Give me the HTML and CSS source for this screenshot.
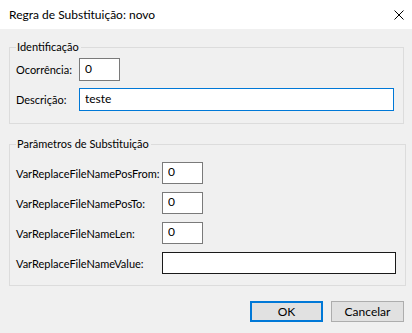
FILE: index.html
```html
<!DOCTYPE html>
<html lang="pt">
  <head>
    <meta charset="UTF-8" />
    <meta name="viewport" content="width=device-width, initial-scale=1.0" />
    <title>Regra de Substituição: novo</title>
    <link rel="stylesheet" href="styles.css">
  </head>
  <body>
    <div class="titlebar">
      <span class="title">Regra de Substituição: novo</span>
      <svg class="close" width="10" height="10" viewBox="0 0 10 10">
        <path d="M0.5 0.5 L9.5 9.5 M9.5 0.5 L0.5 9.5" stroke="#000" stroke-width="1" fill="none" />
      </svg>
    </div>

    <div class="dialog">
      <fieldset class="group group-ident">
        <legend>Identificação</legend>
        <div class="row">
          <label class="label-short" for="ocorrencia">Ocorrência:</label>
          <input class="field field-small" type="text" id="ocorrencia" value="0" />
        </div>
        <div class="row">
          <label class="label-short" for="descricao">Descrição:</label>
          <input class="field field-wide focused" type="text" id="descricao" value="teste" />
        </div>
      </fieldset>

      <fieldset class="group group-params">
        <legend>Parâmetros de Substituição</legend>
        <div class="row">
          <label class="label-long" for="posFrom">VarReplaceFileNamePosFrom:</label>
          <input class="field field-small" type="text" id="posFrom" value="0" />
        </div>
        <div class="row">
          <label class="label-long" for="posTo">VarReplaceFileNamePosTo:</label>
          <input class="field field-small" type="text" id="posTo" value="0" />
        </div>
        <div class="row">
          <label class="label-long" for="nameLen">VarReplaceFileNameLen:</label>
          <input class="field field-small" type="text" id="nameLen" value="0" />
        </div>
        <div class="row row-last">
          <label class="label-long" for="nameValue">VarReplaceFileNameValue:</label>
          <input class="field field-value" type="text" id="nameValue" value="" />
        </div>
      </fieldset>

      <div class="buttons">
        <button class="btn btn-default" type="button">OK</button>
        <button class="btn" type="button">Cancelar</button>
      </div>
    </div>
  </body>
</html>
```

FILE: styles.css
```css
:root {
  --bg-color: #f0f0f0;
  --text-color: #000000;
  --group-border: #dcdcdc;
  --input-border: #7a7a7a;
  --focus-border: #0078d7;
  --button-bg: #e1e1e1;
  --button-border: #adadad;
}

* {
  box-sizing: border-box;
}

body {
  margin: 0;
  width: 412px;
  height: 333px;
  background-color: var(--bg-color);
  color: var(--text-color);
  font-family: Lato, "Noto Sans", sans-serif;
  font-size: 12px;
  overflow: hidden;
}

.titlebar {
  display: flex;
  align-items: center;
  justify-content: space-between;
  height: 29px;
  padding: 0 8px 0 9px;
  background-color: #ffffff;
}

.title {
  line-height: 29px;
}

.close {
  display: block;
  margin-top: 1px;
}

.dialog {
  padding: 11px 8px 0 9px;
  font-size: 11px;
}

.group {
  margin: 0;
  padding: 0 9px 0 6px;
  border: 1px solid var(--group-border);
}

.group legend {
  padding: 0 2px 0 1px;
  line-height: 14px;
}

.group-ident {
  padding-top: 4px;
  padding-bottom: 12px;
}

.group-params {
  margin-top: 13px;
  padding-top: 11px;
  padding-bottom: 11px;
}

.row {
  display: flex;
  align-items: center;
}

.row label {
  flex-shrink: 0;
  white-space: nowrap;
}

.group-ident .row + .row {
  margin-top: 7px;
}

.group-params .row + .row {
  margin-top: 8px;
}

.group-params .row-last {
  margin-top: 9px;
}

.label-short {
  width: 63px;
}

.label-long {
  width: 146px;
}

.field {
  height: 23px;
  padding: 0 4px 3px 5px;
  border: 1px solid var(--input-border);
  background-color: #ffffff;
  color: var(--text-color);
  font-family: inherit;
  font-size: 12px;
  outline: none;
}

.group-params .field {
  height: 22px;
}

.field-small {
  width: 41px;
}

.field-wide {
  width: 315px;
}

.field-value {
  width: 234px;
  border-color: #1a1a1a;
}

.focused {
  border-color: var(--focus-border);
}

.buttons {
  display: flex;
  justify-content: flex-end;
  gap: 8px;
  margin-top: 15px;
}

.btn {
  width: 73px;
  height: 21px;
  padding: 0;
  border: 1px solid var(--button-border);
  background-color: var(--button-bg);
  color: var(--text-color);
  font-family: inherit;
  font-size: 12px;
}

.btn-default {
  border: 2px solid var(--focus-border);
}
```
